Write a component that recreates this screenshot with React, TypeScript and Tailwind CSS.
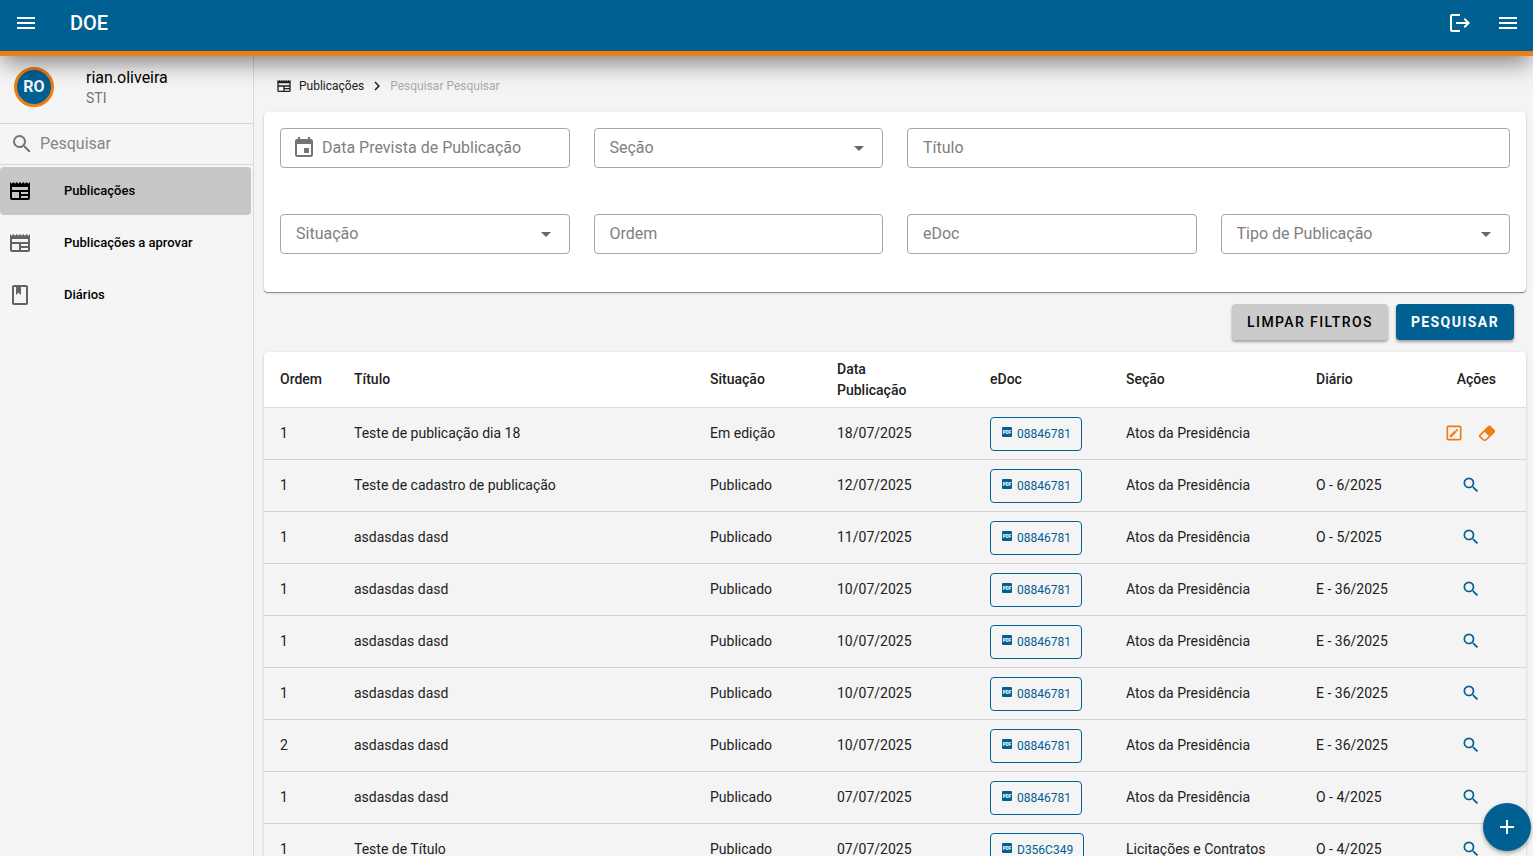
import type { ReactNode } from "react"

const icons = {
  menu: "M3,6H21V8H3V6M3,11H21V13H3V11M3,16H21V18H3V16Z",
  logout:
    "M17 7L15.59 8.41L18.17 11H8V13H18.17L15.59 15.58L17 17L22 12M4 5H12V3H4C2.9 3 2 3.9 2 5V19C2 20.1 2.9 21 4 21H12V19H4V5Z",
  newspaper:
    "M20,11H4V8H20M20,15H13V13H20M20,19H13V17H20M11,19H4V13H11M20.33,4.67L18.67,3L17,4.67L15.33,3L13.67,4.67L12,3L10.33,4.67L8.67,3L7,4.67L5.33,3L3.67,4.67L2,3V19A2,2 0 0,0 4,21H20A2,2 0 0,0 22,19V3L20.33,4.67Z",
  book: "M18,2A2,2 0 0,1 20,4V20A2,2 0 0,1 18,22H6A2,2 0 0,1 4,20V4A2,2 0 0,1 6,2H18M18,4H13V12L10.5,9.75L8,12V4H6V20H18V4Z",
  calendar:
    "M19,19H5V8H19M16,1V3H8V1H6V3H5C3.89,3 3,3.89 3,5V19A2,2 0 0,0 5,21H19A2,2 0 0,0 21,19V5C21,3.89 20.1,3 19,3H18V1M17,12H12V17H17V12Z",
  magnify:
    "M9.5,3A6.5,6.5 0 0,1 16,9.5C16,11.11 15.41,12.59 14.44,13.73L14.71,14H15.5L20.5,19L19,20.5L14,15.5V14.71L13.73,14.44C12.59,15.41 11.11,16 9.5,16A6.5,6.5 0 0,1 3,9.5A6.5,6.5 0 0,1 9.5,3M9.5,5C7,5 5,7 5,9.5C5,12 7,14 9.5,14C12,14 14,12 14,9.5C14,7 12,5 9.5,5Z",
  chevronRight: "M8.59,16.58L13.17,12L8.59,7.41L10,6L16,12L10,18L8.59,16.58Z",
  menuDown: "M7,10L12,15L17,10H7Z",
  edit: "M19,19V5H5V19H19M19,3A2,2 0 0,1 21,5V19A2,2 0 0,1 19,21H5A2,2 0 0,1 3,19V5C3,3.89 3.9,3 5,3H19M16.7,9.35L15.7,10.35L13.65,8.3L14.65,7.3C14.86,7.08 15.21,7.08 15.42,7.3L16.7,8.58C16.92,8.79 16.92,9.14 16.7,9.35M7,14.94L13.06,8.88L15.12,10.94L9.06,17H7V14.94Z",
  eraser:
    "M16.24,3.56L21.19,8.5C21.97,9.29 21.97,10.55 21.19,11.34L12,20.53C10.44,22.09 7.91,22.09 6.34,20.53L2.81,17C2.03,16.21 2.03,14.95 2.81,14.16L13.41,3.56C14.2,2.78 15.46,2.78 16.24,3.56M4.22,15.58L7.76,19.11C8.54,19.9 9.8,19.9 10.59,19.11L14.12,15.58L9.17,10.63L4.22,15.58Z",
  plus: "M19,13H13V19H11V13H5V11H11V5H13V11H19V13Z"
}

type IconName = keyof typeof icons

function Icon({ name, className = "size-6" }: { name: IconName; className?: string }) {
  return (
    <svg viewBox="0 0 24 24" fill="currentColor" aria-hidden="true" className={`shrink-0 ${className}`}>
      <path d={icons[name]} />
    </svg>
  )
}

function PdfIcon() {
  return (
    <svg viewBox="0 0 24 24" aria-hidden="true" className="mb-1 size-3 shrink-0">
      <rect x="2" y="2" width="20" height="20" rx="2" fill="currentColor" />
      <text x="12" y="15" textAnchor="middle" fontSize="9" fontWeight="900" fill="#fff">
        PDF
      </text>
    </svg>
  )
}

const menuItems: { label: string; icon: IconName; active?: boolean }[] = [
  { label: "Publicações", icon: "newspaper", active: true },
  { label: "Publicações a aprovar", icon: "newspaper" },
  { label: "Diários", icon: "book" }
]

const presidencia = "Atos da Presidência"

const rows = [
  { ordem: 1, titulo: "Teste de publicação dia 18", situacao: "Em edição", data: "18/07/2025", edoc: "08846781", secao: presidencia, diario: "" },
  { ordem: 1, titulo: "Teste de cadastro de publicação", situacao: "Publicado", data: "12/07/2025", edoc: "08846781", secao: presidencia, diario: "O - 6/2025" },
  { ordem: 1, titulo: "asdasdas dasd", situacao: "Publicado", data: "11/07/2025", edoc: "08846781", secao: presidencia, diario: "O - 5/2025" },
  { ordem: 1, titulo: "asdasdas dasd", situacao: "Publicado", data: "10/07/2025", edoc: "08846781", secao: presidencia, diario: "E - 36/2025" },
  { ordem: 1, titulo: "asdasdas dasd", situacao: "Publicado", data: "10/07/2025", edoc: "08846781", secao: presidencia, diario: "E - 36/2025" },
  { ordem: 1, titulo: "asdasdas dasd", situacao: "Publicado", data: "10/07/2025", edoc: "08846781", secao: presidencia, diario: "E - 36/2025" },
  { ordem: 2, titulo: "asdasdas dasd", situacao: "Publicado", data: "10/07/2025", edoc: "08846781", secao: presidencia, diario: "E - 36/2025" },
  { ordem: 1, titulo: "asdasdas dasd", situacao: "Publicado", data: "07/07/2025", edoc: "08846781", secao: presidencia, diario: "O - 4/2025" },
  { ordem: 1, titulo: "Teste de Título", situacao: "Publicado", data: "07/07/2025", edoc: "D356C349", secao: "Licitações e Contratos", diario: "O - 4/2025" }
]

function Header() {
  return (
    <header className="relative z-10 flex h-14 shrink-0 items-center border-b-[5px] border-[#f07d13] bg-[#006092] pr-[13px] pb-[5px] pl-[14px] text-white shadow-[0_8px_24px_-2px_rgba(0,0,0,0.5)]">
      <button type="button" aria-label="Menu">
        <Icon name="menu" />
      </button>
      <h1 className="ml-8 text-xl font-medium">DOE</h1>
      <div className="ml-auto flex gap-6">
        <button type="button" aria-label="Sair">
          <Icon name="logout" />
        </button>
        <button type="button" aria-label="Opções">
          <Icon name="menu" />
        </button>
      </div>
    </header>
  )
}

function Sidebar() {
  return (
    <aside className="w-[254px] shrink-0 border-r border-[#d8d8d8] bg-[#f5f5f5]">
      <div className="flex h-[68px] items-center gap-8 border-b border-[#d8d8d8] px-[14px] pb-[5px]">
        <div className="flex size-10 items-center justify-center rounded-full border-3 border-[#f07d13] bg-[#006092] font-bold text-gray-100">
          RO
        </div>
        <div className="pt-[2px]">
          <div className="text-base leading-5">rian.oliveira</div>
          <div className="text-sm leading-5 text-[#757575]">STI</div>
        </div>
      </div>
      <div className="flex h-[41px] items-center gap-[6px] border-b border-[#d8d8d8] px-[10px] text-[#757575]">
        <Icon name="magnify" />
        <input
          aria-label="Pesquisar"
          className="min-w-0 flex-1 outline-none placeholder:text-[#858585]"
          placeholder="Pesquisar"
        />
      </div>
      <nav className="flex flex-col gap-1 pt-[2px] pr-[2px]">
        {menuItems.map(item => (
          <a
            key={item.label}
            href="#"
            className={`flex h-12 items-center gap-8 rounded px-2 text-[13px] font-medium ${item.active ? "bg-[#c7c7c7]" : ""}`}
          >
            <Icon name={item.icon} className={item.active ? "size-6" : "size-6 text-[#636363]"} />
            {item.label}
          </a>
        ))}
      </nav>
    </aside>
  )
}

function Field({ label, icon, wide }: { label: string; icon?: IconName; wide?: boolean }) {
  return (
    <div
      className={`flex h-10 items-center gap-[6px] rounded border border-[#a6a6a6] text-[#757575] ${icon ? "px-[11px]" : "px-[15px]"} ${wide ? "col-span-2" : ""}`}
    >
      {icon && <Icon name={icon} />}
      <input
        aria-label={label}
        className="min-w-0 flex-1 outline-none placeholder:text-[#808080]"
        placeholder={label}
      />
    </div>
  )
}

function SelectField({ label }: { label: string }) {
  return (
    <div className="relative flex h-10 rounded border border-[#a6a6a6] text-[#808080]">
      <select
        aria-label={label}
        className="min-w-0 flex-1 appearance-none px-[15px] outline-none"
        defaultValue=""
      >
        <option value="">{label}</option>
      </select>
      <Icon name="menuDown" className="pointer-events-none absolute top-[7px] right-[11px] size-6 text-[#666]" />
    </div>
  )
}

function Th({ children, className = "" }: { children: ReactNode; className?: string }) {
  return <th className={`border-b border-[#dcdcdc] px-4 text-left font-medium ${className}`}>{children}</th>
}

function Td({ children }: { children: ReactNode }) {
  return <td className="border-b border-[#d4d4d4] px-4">{children}</td>
}

function PublicationsTable() {
  return (
    <div className="mt-3 overflow-hidden rounded shadow-[0_1px_3px_rgba(0,0,0,0.2)]">
      <table className="w-full table-fixed border-separate border-spacing-0 text-sm leading-[21px] text-[#212121]">
        <colgroup>
          <col className="w-[74px]" />
          <col />
          <col className="w-[127px]" />
          <col className="w-[153px]" />
          <col className="w-[136px]" />
          <col className="w-[190px]" />
          <col className="w-[115px]" />
          <col className="w-[111px]" />
        </colgroup>
        <thead className="bg-white">
          <tr className="h-14">
            <Th>Ordem</Th>
            <Th>Título</Th>
            <Th>Situação</Th>
            <Th>
              Data
              <br />
              Publicação
            </Th>
            <Th>eDoc</Th>
            <Th>Seção</Th>
            <Th>Diário</Th>
            <Th className="pr-[30px] text-right">Ações</Th>
          </tr>
        </thead>
        <tbody className="bg-[#f4f4f4]">
          {rows.map((row, i) => (
            <tr key={i} className="h-[52px]">
              <Td>{row.ordem}</Td>
              <Td>{row.titulo}</Td>
              <Td>{row.situacao}</Td>
              <Td>{row.data}</Td>
              <Td>
                <a
                  href="#"
                  className="flex h-[34px] w-fit items-center gap-1 rounded border border-[#006092] px-[10px] text-xs text-[#006092]"
                >
                  <PdfIcon />
                  {row.edoc}
                </a>
              </Td>
              <Td>{row.secao}</Td>
              <Td>{row.diario}</Td>
              <Td>
                <div className="flex justify-center gap-[13px] pb-[2px]">
                  {row.diario ? (
                    <button type="button" aria-label="Visualizar" className="text-[#006092]">
                      <Icon name="magnify" className="size-5" />
                    </button>
                  ) : (
                    <>
                      <button type="button" aria-label="Editar" className="text-[#f07d13]">
                        <Icon name="edit" className="size-5" />
                      </button>
                      <button type="button" aria-label="Excluir" className="text-[#f07d13]">
                        <Icon name="eraser" className="size-5" />
                      </button>
                    </>
                  )}
                </div>
              </Td>
            </tr>
          ))}
        </tbody>
      </table>
    </div>
  )
}

export default function App() {
  return (
    <div className="flex h-screen flex-col overflow-hidden bg-[#f4f4f4] font-[Roboto,sans-serif] text-base text-black">
      <Header />
      <div className="flex min-h-0 flex-1">
        <Sidebar />
        <main className="min-w-0 flex-1 overflow-y-auto pr-[7px] pl-[10px] [scrollbar-width:none]">
          <nav aria-label="Breadcrumb" className="flex h-14 items-center pt-1 pl-3 text-xs text-[#212121]">
            <Icon name="newspaper" className="mr-[7px] size-4" />
            <a href="#">Publicações</a>
            <Icon name="chevronRight" className="mx-1 size-[18px]" />
            <span className="text-[#ababab]">Pesquisar Pesquisar</span>
          </nav>
          <form onSubmit={e => e.preventDefault()}>
            <div className="grid grid-cols-4 gap-x-6 gap-y-[46px] rounded bg-white px-4 pt-4 pb-[38px] shadow-[0_1px_1px_rgba(0,0,0,0.4),0_1px_3px_rgba(0,0,0,0.12)]">
              <Field label="Data Prevista de Publicação" icon="calendar" />
              <SelectField label="Seção" />
              <Field label="Título" wide />
              <SelectField label="Situação" />
              <Field label="Ordem" />
              <Field label="eDoc" />
              <SelectField label="Tipo de Publicação" />
            </div>
            <div className="mt-3 flex justify-end gap-2 pr-3 text-sm tracking-widest">
              <button
                type="reset"
                className="h-9 rounded bg-[#cbcbcb] px-[15px] font-medium shadow-[0_2px_3px_rgba(0,0,0,0.35)]"
              >
                LIMPAR FILTROS
              </button>
              <button
                type="submit"
                className="h-9 rounded bg-[#006092] px-[15px] font-bold text-white shadow-[0_2px_3px_rgba(0,0,0,0.35)]"
              >
                PESQUISAR
              </button>
            </div>
          </form>
          <PublicationsTable />
        </main>
      </div>
      <button
        type="button"
        aria-label="Adicionar"
        className="fixed right-[2px] bottom-[5px] flex size-12 items-center justify-center rounded-full bg-[#006092] text-white shadow-[0_2px_4px_rgba(0,0,0,0.35)]"
      >
        <Icon name="plus" />
      </button>
    </div>
  )
}
